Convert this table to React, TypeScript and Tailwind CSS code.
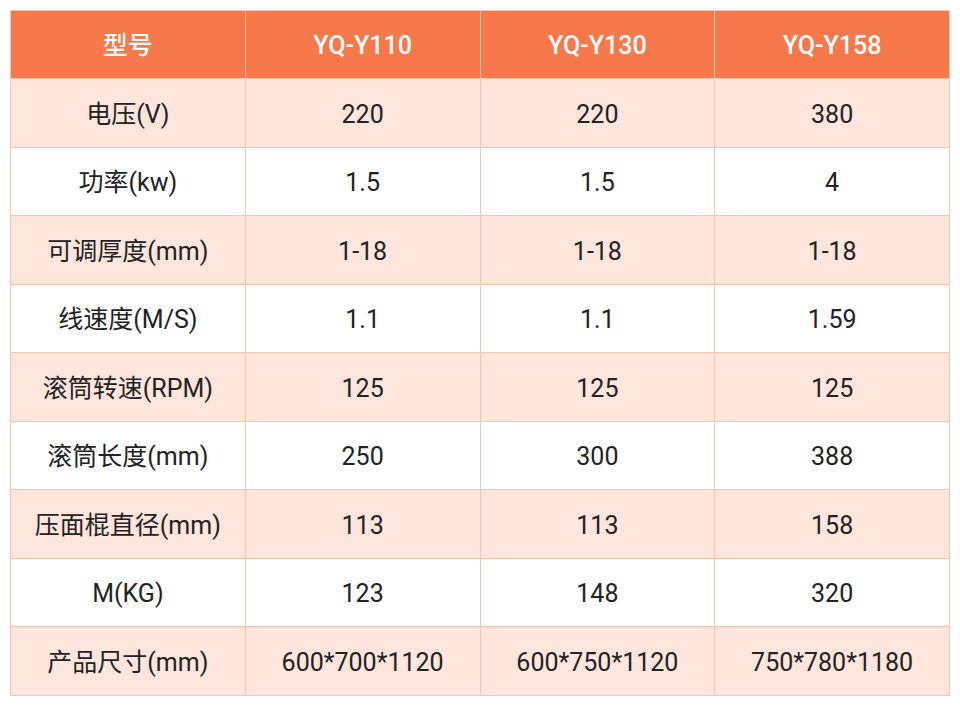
const headers = ["型号", "YQ-Y110", "YQ-Y130", "YQ-Y158"];

const rows: string[][] = [
  ["电压(V)", "220", "220", "380"],
  ["功率(kw)", "1.5", "1.5", "4"],
  ["可调厚度(mm)", "1-18", "1-18", "1-18"],
  ["线速度(M/S)", "1.1", "1.1", "1.59"],
  ["滚筒转速(RPM)", "125", "125", "125"],
  ["滚筒长度(mm)", "250", "300", "388"],
  ["压面棍直径(mm)", "113", "113", "158"],
  ["M(KG)", "123", "148", "320"],
  ["产品尺寸(mm)", "600*700*1120", "600*750*1120", "750*780*1180"],
];

export default function App() {
  return (
    <div className="w-[960px] h-[705px] bg-white p-[10px] font-['Roboto','Noto_Sans_CJK_SC',sans-serif]">
      <table className="w-[940px] border-collapse table-fixed text-[25px] text-[#222]">
        <thead>
          <tr className="h-[68px] bg-[#f7784b] text-white">
            {headers.map((h) => (
              <th key={h} className="border border-[#f9c3ad] font-medium text-center pt-[2px]">
                {h}
              </th>
            ))}
          </tr>
        </thead>
        <tbody>
          {rows.map((r, i) => (
            <tr key={i} className={i % 2 === 0 ? "h-[68.5px] bg-[#fee6dc]" : "h-[68.5px] bg-white"}>
              {r.map((c, j) => (
                <td key={j} className="border border-[#f9c3ad] text-center pt-[3px]">
                  {c}
                </td>
              ))}
            </tr>
          ))}
        </tbody>
      </table>
    </div>
  );
}
